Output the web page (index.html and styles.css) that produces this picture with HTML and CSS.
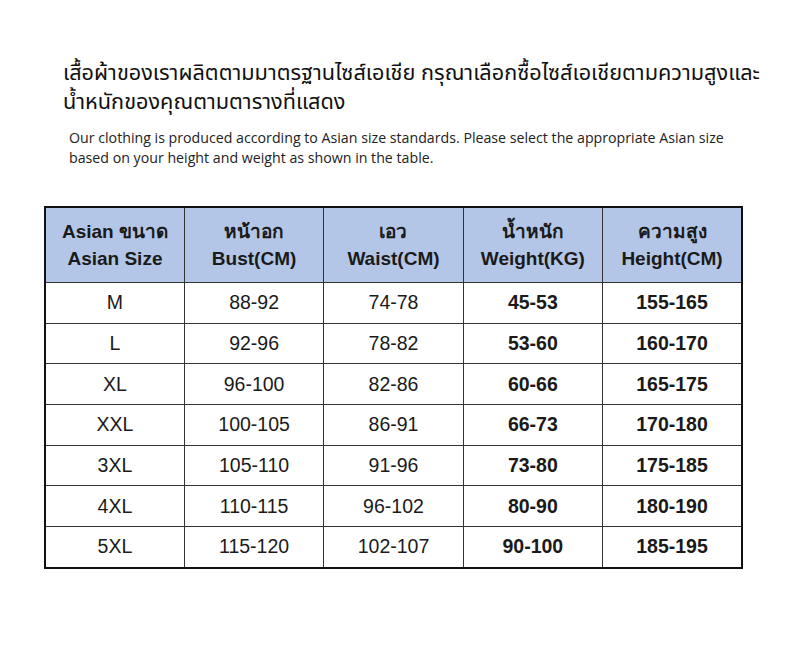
FILE: index.html
```html
<!DOCTYPE html>
<html lang="th">
<head>
<meta charset="utf-8">
<link rel="stylesheet" href="styles.css">
</head>
<body>
<div class="page">
  <h1 class="title">เสื้อผ้าของเราผลิตตามมาตรฐานไซส์เอเชีย กรุณาเลือกซื้อไซส์เอเชียตามความสูงและ<br>น้ำหนักของคุณตามตารางที่แสดง</h1>
  <p class="subtitle">Our clothing is produced according to Asian size standards. Please select the appropriate Asian size<br>based on your height and weight as shown in the table.</p>
  <table class="sizes">
    <thead>
      <tr>
        <th>Asian ขนาด<br>Asian Size</th>
        <th>หน้าอก<br>Bust(CM)</th>
        <th>เอว<br>Waist(CM)</th>
        <th>น้ำหนัก<br>Weight(KG)</th>
        <th>ความสูง<br>Height(CM)</th>
      </tr>
    </thead>
    <tbody>
      <tr><td>M</td><td>88-92</td><td>74-78</td><td class="b">45-53</td><td class="b">155-165</td></tr>
      <tr><td>L</td><td>92-96</td><td>78-82</td><td class="b">53-60</td><td class="b">160-170</td></tr>
      <tr><td>XL</td><td>96-100</td><td>82-86</td><td class="b">60-66</td><td class="b">165-175</td></tr>
      <tr><td>XXL</td><td>100-105</td><td>86-91</td><td class="b">66-73</td><td class="b">170-180</td></tr>
      <tr><td>3XL</td><td>105-110</td><td>91-96</td><td class="b">73-80</td><td class="b">175-185</td></tr>
      <tr><td>4XL</td><td>110-115</td><td>96-102</td><td class="b">80-90</td><td class="b">180-190</td></tr>
      <tr><td>5XL</td><td>115-120</td><td>102-107</td><td class="b">90-100</td><td class="b">185-195</td></tr>
    </tbody>
  </table>
</div>
</body>
</html>
```
FILE: styles.css
```css
html, body {
  margin: 0;
  padding: 0;
  background: #ffffff;
}
.page {
  padding-top: 57px;
}
.title {
  margin: 0 0 0 63px;
  font-family: "Noto Sans", "Noto Sans Thai", "Open Sans", sans-serif;
  font-weight: 400;
  font-size: 21.7px;
  line-height: 29px;
  color: #111;
  white-space: nowrap;
}
.subtitle {
  margin: 13px 0 0 69px;
  font-family: "Open Sans", "Noto Sans", sans-serif;
  font-size: 14.2px;
  line-height: 20px;
  color: #222;
  white-space: nowrap;
}
.sizes {
  margin: 38px 0 0 44px;
  border-collapse: collapse;
  border: 2px solid #111;
  font-family: "Liberation Sans", Arial, "Noto Sans", sans-serif;
  color: #1a1a1a;
  table-layout: fixed;
  width: 699px;
}
.sizes th, .sizes td {
  border: 1px solid #333;
  text-align: center;
  padding: 0;
}
.sizes th {
  background: #b4c6e7;
  font-weight: 700;
  font-size: 19px;
  line-height: 27px;
  height: 74px;
}
.sizes td {
  font-size: 19.5px;
  height: 39.7px;
}
.sizes td.b {
  font-weight: 700;
}
```
